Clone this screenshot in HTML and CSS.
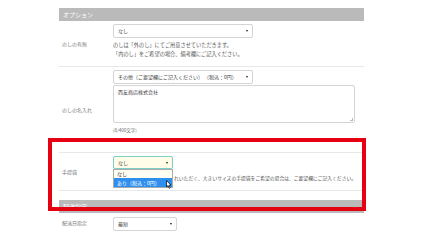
FILE: index.html
```html
<!DOCTYPE html>
<html lang="ja">
<head>
<meta charset="utf-8">
<link rel="stylesheet" href="styles.css">
</head>
<body>
<div class="page">
  <section class="panel">
    <h2 class="bar">オプション</h2>
    <div class="row row-noshi">
      <div class="label">のしの有無</div>
      <div class="field">
        <div class="select s-wide">なし<span class="arrow"></span></div>
        <p class="note">のしは「外のし」にてご用意させていただきます。<br>「内のし」をご希望の場合、備考欄にご記入ください。</p>
      </div>
    </div>
    <div class="row row-name">
      <div class="label">のしの名入れ</div>
      <div class="field">
        <div class="select s-wide">その他（ご要望欄にご記入ください） （税込：0円）<span class="arrow"></span></div>
        <div class="textarea">西友商店株式会社<span class="grip"></span></div>
        <p class="count">(8/400文字)</p>
      </div>
    </div>
    <div class="row row-bag">
      <div class="label">手提袋</div>
      <div class="field">
        <div class="select s-short focus">なし<span class="arrow"></span></div>
        <p class="note note-bag">れいただく、大きいサイズの手提袋をご希望の場合は、ご要望欄にご記入ください。</p>
        <ul class="dropdown">
          <li class="opt">なし</li>
          <li class="opt sel">あり（税込：0円）</li>
        </ul>
        <svg class="cursor" width="6" height="9" viewBox="0 0 6 9"><path d="M0.5 0.5 L0.5 7 L2 5.6 L3.2 8.3 L4.2 7.8 L3 5.2 L5 5.2 Z" fill="#fff" stroke="#000" stroke-width="0.7"/></svg>
      </div>
    </div>
  </section>
  <section class="panel panel2">
    <h2 class="bar">配送指定</h2>
    <div class="row row-date">
      <div class="label">配送日指定</div>
      <div class="field">
        <div class="select s-date">最短<span class="arrow"></span></div>
      </div>
    </div>
  </section>
  <div class="highlight"></div>
</div>
</body>
</html>
```

FILE: styles.css
```css
* { box-sizing: border-box; margin: 0; padding: 0; }
html, body { background: #fff; }
body {
  width: 430px;
  height: 245px;
  overflow: hidden;
  font-family: "Noto Sans CJK JP", "Noto Sans", sans-serif;
  color: #666;
}
.page {
  position: relative;
  padding-top: 8px;
}
.panel {
  margin-left: 59px;
  width: 305px;
}
.panel2 { margin-top: 9px; }
.bar {
  height: 13px;
  background: #bababa;
  color: #fff;
  font-weight: normal;
  font-size: 6px;
  line-height: 13px;
  padding-left: 4px;
}
.row {
  display: flex;
  border-bottom: 1px solid #e8e8e8;
}
.label {
  flex: 0 0 54px;
  padding-left: 3px;
  font-size: 5px;
  line-height: 8px;
  align-self: center;
  color: #777;
}
.field {
  position: relative;
  flex: 1;
  min-width: 0;
  padding-top: 3px;
}
.row-noshi { height: 46px; }
.row-name { height: 86px; }
.row-bag { height: 38px; }
.row-date { height: 30px; border-bottom: none; }
.row-date .field { padding-top: 4px; }
.row-date .label { align-self: flex-start; padding-top: 6px; }

.select {
  position: relative;
  height: 14px;
  border: 1px solid #d4d4d4;
  border-radius: 2px;
  background: #fff;
  font-size: 5px;
  line-height: 12px;
  padding-left: 4px;
  color: #444;
  white-space: nowrap;
}
.arrow {
  position: absolute;
  right: 4px;
  top: 5px;
  width: 0;
  height: 0;
  border-left: 1.2px solid transparent;
  border-right: 1.2px solid transparent;
  border-top: 2px solid #222;
}
.s-wide { width: 140px; }
.s-short { width: 60px; height: 13px; line-height: 11px; }
.s-short .arrow { top: 4.5px; }
.s-date { width: 64px; }
.focus {
  border-color: #7ccfc4;
  background: #fffde8;
}
.note {
  margin-top: 2px;
  font-size: 5.2px;
  line-height: 9px;
  color: #555;
  white-space: nowrap;
}
.note-bag {
  margin-top: 4px;
  line-height: 10px;
  font-size: 4.8px;
  padding-left: 61px;
}
.textarea {
  position: relative;
  margin-top: 1px;
  width: 242px;
  height: 38px;
  border: 1px solid #d4d4d4;
  border-radius: 2px;
  font-size: 5px;
  line-height: 9px;
  padding: 1px 4px;
  color: #444;
}
.grip {
  position: absolute;
  right: 1px;
  bottom: 1px;
  width: 3px;
  height: 3px;
  border-right: 1px solid #bbb;
  border-bottom: 1px solid #bbb;
}
.count {
  margin-top: 3px;
  font-size: 4.5px;
  line-height: 8px;
  color: #666;
}
.dropdown {
  list-style: none;
  position: absolute;
  left: 0;
  top: 16px;
  width: 60px;
  border: 1px solid #aaa;
  background: #fffef2;
  font-size: 5px;
  color: #333;
}
.opt {
  height: 8px;
  line-height: 8px;
  padding-left: 3px;
}
.opt.sel {
  height: 9px;
  line-height: 9px;
  background: #2f8fef;
  color: #fff;
}
.cursor {
  position: absolute;
  left: 53px;
  top: 27px;
}
.highlight {
  position: absolute;
  left: 48px;
  top: 138px;
  width: 318px;
  height: 73px;
  border: 4px solid #e50012;
}
```
